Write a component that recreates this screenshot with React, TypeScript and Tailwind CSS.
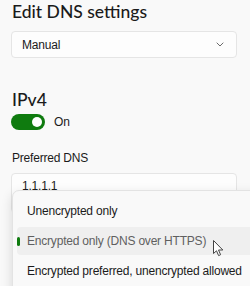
import React from "react";

export default function App() {
  return (
    <div
      className="relative w-[250px] h-[286px] overflow-hidden bg-[#f9f9f9] text-[#1b1b1b] tracking-[-0.2px]"
      style={{ fontFamily: '"Liberation Sans", Arial, sans-serif' }}
    >
      <div className="flex flex-col pl-[11px] pr-[13px]">
        <div
          className="mt-[1px] h-[22px] text-[17.5px] leading-[22px] font-medium pl-[1px] whitespace-nowrap tracking-normal"
          style={{ fontFamily: 'Lato, "Noto Sans", sans-serif' }}
        >
          Edit DNS settings
        </div>
        <div className="mt-[8px] h-[27px] rounded-[4px] border border-[#e5e5e5] bg-[#fdfdfd] flex items-center justify-between pl-[10px] pr-[12px]">
          <span className="text-[12px] leading-none">Manual</span>
          <svg width="8" height="5" viewBox="0 0 8 5" fill="none">
            <path d="M0.7 0.7 L4 4 L7.3 0.7" stroke="#6b6b6b" strokeWidth="1" />
          </svg>
        </div>
        <div
          className="mt-[31px] h-[22px] text-[17.5px] leading-[22px] font-medium pl-[1px] tracking-normal"
          style={{ fontFamily: 'Lato, "Noto Sans", sans-serif' }}
        >
          IPv4
        </div>
        <div className="mt-[3px] flex items-center gap-[9px]">
          <div className="w-[34px] h-[16px] rounded-full bg-[#0f7b0f] flex items-center justify-end pr-[3px]">
            <div className="w-[10px] h-[10px] rounded-full bg-white" />
          </div>
          <span className="text-[12px] leading-none">On</span>
        </div>
        <div className="mt-[20px] text-[12px] leading-[16px] pl-[1px]">Preferred DNS</div>
        <div className="mt-[7px] h-[40px] rounded-[4px] border border-[#e5e5e5] bg-[#fdfdfd] pl-[10px] pt-[4px] text-[12px] leading-[16px]">
          1.1.1.1
        </div>
      </div>

      <div className="absolute left-[12px] top-[190px] w-[260px] h-[110px] rounded-tl-[7px] border border-[#e3e3e3] bg-[#f9f9f9] shadow-[0_4px_12px_rgba(0,0,0,0.14)] px-[4px] pt-[5px] text-[12px] whitespace-nowrap">
        <div className="h-[30px] flex items-center pl-[10px]">Unencrypted only</div>
        <div className="relative h-[28px] mt-[1px] rounded-[4px] bg-[#efefef] flex items-center pl-[10px] text-[#5f5f5f]">
          <div className="absolute left-0 top-[10px] w-[3px] h-[9px] rounded-full bg-[#0f7b0f]" />
          Encrypted only (DNS over HTTPS)
        </div>
        <div className="h-[30px] mt-[1px] flex items-center pl-[10px]">
          Encrypted preferred, unencrypted allowed
        </div>
      </div>

      <svg
        className="absolute left-[213px] top-[240px]"
        width="11"
        height="17"
        viewBox="0 0 11 17"
      >
        <path
          d="M0.5 0.5 L0.5 13.5 L3.5 10.8 L5.6 15.6 L7.6 14.7 L5.5 10 L9.8 10 Z"
          fill="#ffffff"
          stroke="#444"
          strokeWidth="1"
          strokeLinejoin="round"
        />
      </svg>
    </div>
  );
}
